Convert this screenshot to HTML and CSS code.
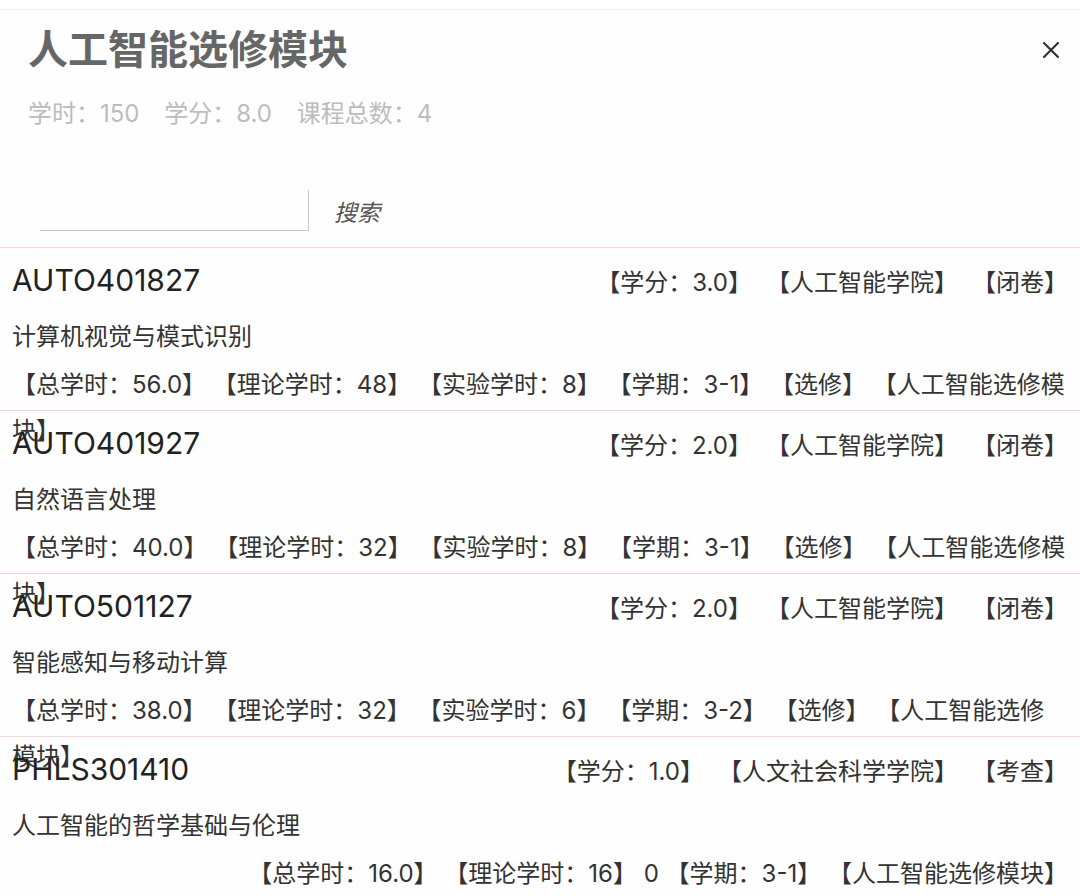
FILE: index.html
```html
<!DOCTYPE html>
<html lang="zh-CN">
<head>
    <meta charset="UTF-8" />
    <meta name="viewport" content="width=device-width, initial-scale=1.0" />
    <title>人工智能选修模块</title>
    <link rel="stylesheet" href="styles.css">
</head>
<body>
  <div class="modal">
    <div class="modal-head">
      <div>
        <h2 class="title">人工智能选修模块</h2>
        <div class="summary">
          <span>学时：150</span>
          <span>学分：8.0</span>
          <span>课程总数：4</span>
        </div>
      </div>
      <button class="close" aria-label="关闭">
        <svg width="18" height="18" viewBox="0 0 18 18"><path d="M2 2L16 16M16 2L2 16" stroke="#333" stroke-width="2.2" stroke-linecap="round" fill="none"/></svg>
      </button>
    </div>

    <div class="search">
      <input type="text" class="search-input" />
      <span class="search-btn">搜索</span>
    </div>

    <!-- lista de cursos -->
    <ul class="course-list">
      <li class="course">
        <div class="course-top">
          <span class="code">AUTO401827</span>
          <span class="tags"><span>【学分：3.0】</span><span>【人工智能学院】</span><span>【闭卷】</span></span>
        </div>
        <div class="course-name">计算机视觉与模式识别</div>
        <div class="course-info"><p>【总学时：56.0】 【理论学时：48】 【实验学时：8】 【学期：3-1】 【选修】 【人工智能选修模块】</p></div>
      </li>
      <li class="course">
        <div class="course-top">
          <span class="code">AUTO401927</span>
          <span class="tags"><span>【学分：2.0】</span><span>【人工智能学院】</span><span>【闭卷】</span></span>
        </div>
        <div class="course-name">自然语言处理</div>
        <div class="course-info"><p>【总学时：40.0】 【理论学时：32】 【实验学时：8】 【学期：3-1】 【选修】 【人工智能选修模块】</p></div>
      </li>
      <li class="course">
        <div class="course-top">
          <span class="code">AUTO501127</span>
          <span class="tags"><span>【学分：2.0】</span><span>【人工智能学院】</span><span>【闭卷】</span></span>
        </div>
        <div class="course-name">智能感知与移动计算</div>
        <div class="course-info"><p>【总学时：38.0】 【理论学时：32】 【实验学时：6】 【学期：3-2】 【选修】 【人工智能选修模块】</p></div>
      </li>
      <li class="course">
        <div class="course-top">
          <span class="code">PHLS301410</span>
          <span class="tags"><span>【学分：1.0】</span><span>【人文社会科学学院】</span><span>【考查】</span></span>
        </div>
        <div class="course-name">人工智能的哲学基础与伦理</div>
        <div class="course-info"><p>【总学时：16.0】 【理论学时：16】 0 【学期：3-1】 【人工智能选修模块】</p></div>
      </li>
    </ul>
  </div>
</body>
</html>
```

FILE: styles.css
```css
body {
  margin: 0;
  padding: 0;
  background-color: #fff;
  font-family: Inter, "Noto Sans CJK SC", sans-serif;
  color: #333;
  overflow: hidden;
}
.modal {
  margin-top: 9px;
  border-top: 1px solid #eeeeee;
  background-color: #fefefe;
}
.modal-head {
  display: flex;
  justify-content: space-between;
  align-items: flex-start;
  padding: 16px 20px 0 28px;
}
.title {
  margin: 0;
  font-size: 40px;
  line-height: 48px;
  font-weight: bold;
  color: #666;
}
.summary {
  margin-top: 24px;
  font-size: 24px;
  line-height: 32px;
  color: #bcbcbc;
}
.summary span {
  margin-right: 18px;
}
.close {
  margin-top: 15px;
  padding: 0;
  border: none;
  background: none;
  width: 18px;
  height: 18px;
  cursor: pointer;
}
.close svg {
  display: block;
}
.search {
  display: flex;
  align-items: center;
  margin-top: 60px;
  padding-left: 40px;
}
.search-input {
  box-sizing: border-box;
  width: 269px;
  height: 41px;
  margin: 0;
  border: none;
  border-right: 1px solid #c8c8c8;
  border-bottom: 1px solid #c8c8c8;
  background: transparent;
  outline: none;
}
.search-btn {
  margin-left: 25px;
  font-size: 23px;
  font-style: italic;
  color: #555;
}
.course-list {
  list-style: none;
  margin: 16px 0 0 0;
  padding: 0;
}
.course {
  box-sizing: border-box;
  height: 163px;
  padding: 0 12px;
  border-top: 1px solid #f6d6da;
  overflow: visible;
}
.course-top {
  display: flex;
  justify-content: space-between;
  align-items: center;
  height: 64px;
}
.code {
  font-size: 30px;
  color: #222;
}
.tags {
  font-size: 24px;
  color: #333;
}
.tags span {
  margin-left: 26px;
}
.course-name {
  font-size: 24px;
  line-height: 50px;
  color: #333;
}
.course-info {
  display: flex;
  justify-content: flex-end;
}
.course-info p {
  margin: 0;
  font-size: 24px;
  line-height: 46px;
  color: #333;
}
```
